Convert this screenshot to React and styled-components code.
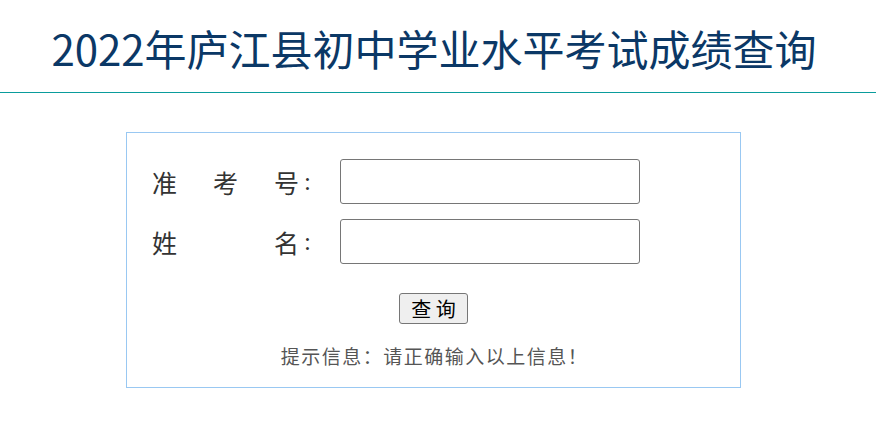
import styled, { createGlobalStyle } from "styled-components";

const GlobalStyle = createGlobalStyle`
  body {
    margin: 0;
    background: #fff;
    font-family: "Noto Sans CJK SC", "Noto Sans", sans-serif;
  }
`;

const Header = styled.header`
  padding: 18px 0 14px;
  border-bottom: 1px solid #0a9c9c;
`;

const Title = styled.h1`
  margin: 0;
  text-align: center;
  font-size: 42px;
  line-height: 60px;
  font-weight: 400;
  color: #0b3866;
  padding-right: 8px;
`;

const Panel = styled.div`
  width: 613px;
  margin: 39px 0 0 126px;
  border: 1px solid #99c8f2;
  display: flex;
  flex-direction: column;
  padding: 26px 0 16px;
`;

const Row = styled.div`
  display: flex;
  align-items: center;
  height: 45px;
  padding-left: 25px;
  margin-bottom: ${props => props.last ? "0" : "15px"};
`;

const Label = styled.label`
  display: flex;
  align-items: center;
  width: 188px;
  font-size: 25px;
  color: #333;
`;

const LabelText = styled.span`
  display: inline-block;
  width: 147px;
  text-align: justify;
  text-align-last: justify;
`;

const Colon = styled.span`
  font-family: "Liberation Serif", serif;
  margin-left: 5px;
`;

const Input = styled.input`
  box-sizing: border-box;
  width: 300px;
  height: 45px;
  border: 1px solid #767676;
  border-radius: 3px;
  padding: 0 6px;
  font-size: 18px;
  outline: none;
`;

const Button = styled.button`
  align-self: center;
  margin-top: 29px;
  padding: 1px 11px;
  font-family: "Noto Sans CJK SC", sans-serif;
  font-size: 20px;
  line-height: 27px;
  color: #000;
  background: #efefef;
  border: 1px solid #767676;
  border-radius: 3px;
`;

const Hint = styled.p`
  margin: 17px 0 0;
  text-align: center;
  font-size: 19px;
  line-height: 30px;
  letter-spacing: 1.5px;
  color: #555;
  padding-left: 2px;
`;

export default function App() {
  return (
    <>
      <GlobalStyle />
      <Header>
        <Title>2022年庐江县初中学业水平考试成绩查询</Title>
      </Header>
      <Panel>
        <Row>
          <Label>
            <LabelText>准 考 号</LabelText>
            <Colon>:</Colon>
          </Label>
          <Input type="text" />
        </Row>
        <Row last>
          <Label>
            <LabelText>姓 名</LabelText>
            <Colon>:</Colon>
          </Label>
          <Input type="text" />
        </Row>
        <Button type="button">查 询</Button>
        <Hint>提示信息：请正确输入以上信息！</Hint>
      </Panel>
    </>
  );
}
